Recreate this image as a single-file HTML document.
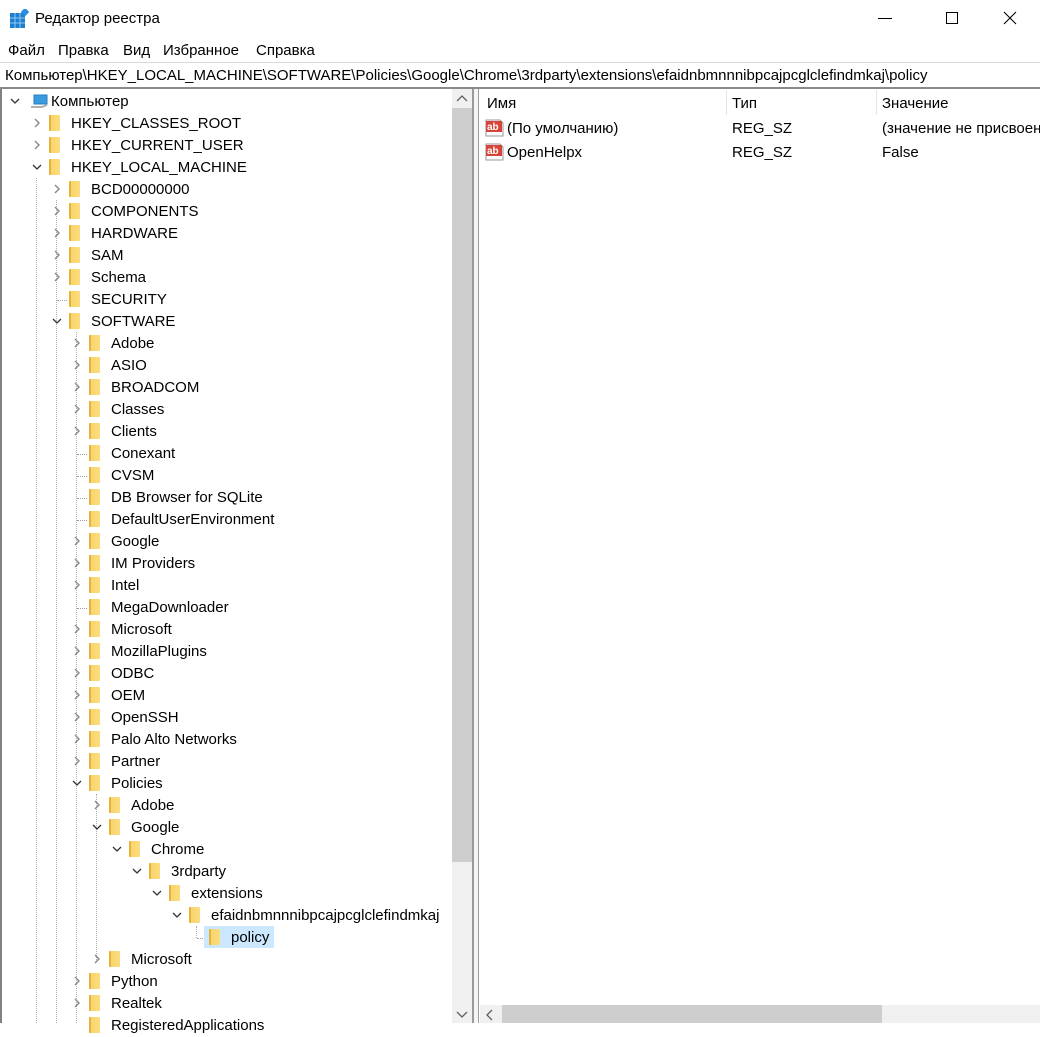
<!DOCTYPE html>
<html><head><meta charset="utf-8"><style>
*{margin:0;padding:0;box-sizing:border-box}
body{width:1040px;height:1023px;overflow:hidden;background:#fff;font-family:"Liberation Sans","DejaVu Sans",sans-serif;font-size:15px;color:#000;position:relative}
.a{position:absolute;white-space:nowrap}
.r{position:absolute;height:22px;line-height:22px;white-space:nowrap}
.r .ch{position:absolute;top:6px;width:10px;height:10px}
.r .f{position:absolute;top:3px;width:11px;height:16px;background:linear-gradient(90deg,#e6b23a 0,#e6b23a 2px,#f8d56c 2px,#fadc80 100%);border-radius:1px}
.r .t{position:absolute;top:1px}
.dl{position:absolute;border-left:1px dotted #b0b0b0}
.dh{position:absolute;border-top:1px dotted #a0a0a0;height:0}
</style></head><body>
<svg class="a" style="left:10px;top:9px" width="19" height="19" viewBox="0 0 19 19">
<rect x="0" y="4" width="15" height="15" fill="#1e7fd0"/>
<g stroke="#8fc6f2" stroke-width="1"><line x1="5" y1="4" x2="5" y2="19"/><line x1="10" y1="4" x2="10" y2="19"/><line x1="0" y1="9" x2="15" y2="9"/><line x1="0" y1="14" x2="15" y2="14"/></g>
<rect x="12" y="0" width="6" height="6" fill="#2b8ce0" transform="rotate(45 15 3)"/>
</svg>
<div class="a" style="left:35px;top:10px;font-size:15px">Редактор реестра</div>
<div class="a" style="left:878px;top:18px;width:14px;height:1px;background:#000"></div>
<div class="a" style="left:946px;top:12px;width:12px;height:12px;border:1px solid #000"></div>
<svg class="a" style="left:1003px;top:11px" width="14" height="14"><path d="M1 1L13 13M13 1L1 13" stroke="#000" stroke-width="1.1"/></svg>
<div class="a" style="left:8px;top:42px">Файл</div>
<div class="a" style="left:58px;top:42px">Правка</div>
<div class="a" style="left:123px;top:42px">Вид</div>
<div class="a" style="left:163px;top:42px">Избранное</div>
<div class="a" style="left:256px;top:42px">Справка</div>
<div class="a" style="left:0;top:62px;width:1040px;height:1px;background:#d9d9d9"></div>
<div class="a" style="left:5px;top:67px">Компьютер\HKEY_LOCAL_MACHINE\SOFTWARE\Policies\Google\Chrome\3rdparty\extensions\efaidnbmnnnibpcajpcglclefindmkaj\policy</div>
<div class="a" style="left:0;top:87px;width:1040px;height:2px;background:#8a8a8a"></div>
<div class="a" style="left:0;top:89px;width:2px;height:934px;background:#828282"></div>
<div class="a" style="left:452px;top:89px;width:20px;height:934px;background:#f0f0f0"></div>
<div class="a" style="left:452px;top:108px;width:20px;height:754px;background:#cdcdcd"></div>
<svg class="a" style="left:456px;top:95px" width="12" height="8"><path d="M1 6L6 1L11 6" stroke="#606060" stroke-width="1.3" fill="none"/></svg>
<svg class="a" style="left:456px;top:1011px" width="12" height="8"><path d="M1 1L6 6L11 1" stroke="#606060" stroke-width="1.3" fill="none"/></svg>
<div class="a" style="left:472px;top:89px;width:2px;height:934px;background:#9a9a9a"></div>
<div class="a" style="left:478px;top:89px;width:1px;height:934px;background:#9a9a9a"></div>
<div class="a" style="left:474px;top:89px;width:4px;height:934px;background:#f5f5f5"></div>

<div class="dl" style="left:36px;top:178px;height:845px"></div>
<div class="dl" style="left:56px;top:200px;height:823px"></div>
<div class="dh" style="left:57px;top:300px;width:10px"></div>
<div class="dl" style="left:76px;top:332px;height:691px"></div>
<div class="dh" style="left:77px;top:454px;width:10px"></div>
<div class="dh" style="left:77px;top:476px;width:10px"></div>
<div class="dh" style="left:77px;top:498px;width:10px"></div>
<div class="dh" style="left:77px;top:520px;width:10px"></div>
<div class="dh" style="left:77px;top:608px;width:10px"></div>
<div class="dl" style="left:96px;top:794px;height:166px"></div>
<div class="dl" style="left:196px;top:926px;height:12px"></div>
<div class="dh" style="left:197px;top:938px;width:10px"></div>

<div class="r" style="top:90px;left:0">
<svg class="ch" style="left:10px" viewBox="0 0 10 10"><path d="M1 3L5 7L9 3" stroke="#333" stroke-width="1.3" fill="none"/></svg>
<svg style="position:absolute;left:30px;top:3px" width="20" height="17"><path d="M4 2L17 2L17 11L4 11Z" fill="#3a9be0" stroke="#2a7cc0"/><path d="M1 14L12 14L17 12" stroke="#b0b0b0" stroke-width="2" fill="none"/></svg>
<span class="t" style="left:51px">Компьютер</span></div>

<div class="r" style="top:112px;left:0"><svg class="ch" style="left:32px" viewBox="0 0 10 10"><path d="M3 1L7 5L3 9" stroke="#888" stroke-width="1.4" fill="none"/></svg><div class="f" style="left:49px"></div><span class="t" style="left:71px">HKEY_CLASSES_ROOT</span></div>
<div class="r" style="top:134px;left:0"><svg class="ch" style="left:32px" viewBox="0 0 10 10"><path d="M3 1L7 5L3 9" stroke="#888" stroke-width="1.4" fill="none"/></svg><div class="f" style="left:49px"></div><span class="t" style="left:71px">HKEY_CURRENT_USER</span></div>
<div class="r" style="top:156px;left:0"><svg class="ch" style="left:32px" viewBox="0 0 10 10"><path d="M1 3L5 7L9 3" stroke="#333" stroke-width="1.3" fill="none"/></svg><div class="f" style="left:49px"></div><span class="t" style="left:71px">HKEY_LOCAL_MACHINE</span></div>

<div class="r" style="top:178px;left:20px"><svg class="ch" style="left:32px" viewBox="0 0 10 10"><path d="M3 1L7 5L3 9" stroke="#888" stroke-width="1.4" fill="none"/></svg><div class="f" style="left:49px"></div><span class="t" style="left:71px">BCD00000000</span></div>
<div class="r" style="top:200px;left:20px"><svg class="ch" style="left:32px" viewBox="0 0 10 10"><path d="M3 1L7 5L3 9" stroke="#888" stroke-width="1.4" fill="none"/></svg><div class="f" style="left:49px"></div><span class="t" style="left:71px">COMPONENTS</span></div>
<div class="r" style="top:222px;left:20px"><svg class="ch" style="left:32px" viewBox="0 0 10 10"><path d="M3 1L7 5L3 9" stroke="#888" stroke-width="1.4" fill="none"/></svg><div class="f" style="left:49px"></div><span class="t" style="left:71px">HARDWARE</span></div>
<div class="r" style="top:244px;left:20px"><svg class="ch" style="left:32px" viewBox="0 0 10 10"><path d="M3 1L7 5L3 9" stroke="#888" stroke-width="1.4" fill="none"/></svg><div class="f" style="left:49px"></div><span class="t" style="left:71px">SAM</span></div>
<div class="r" style="top:266px;left:20px"><svg class="ch" style="left:32px" viewBox="0 0 10 10"><path d="M3 1L7 5L3 9" stroke="#888" stroke-width="1.4" fill="none"/></svg><div class="f" style="left:49px"></div><span class="t" style="left:71px">Schema</span></div>
<div class="r" style="top:288px;left:20px"><div class="f" style="left:49px"></div><span class="t" style="left:71px">SECURITY</span></div>
<div class="r" style="top:310px;left:20px"><svg class="ch" style="left:32px" viewBox="0 0 10 10"><path d="M1 3L5 7L9 3" stroke="#333" stroke-width="1.3" fill="none"/></svg><div class="f" style="left:49px"></div><span class="t" style="left:71px">SOFTWARE</span></div>

<div class="r" style="top:332px;left:40px"><svg class="ch" style="left:32px" viewBox="0 0 10 10"><path d="M3 1L7 5L3 9" stroke="#888" stroke-width="1.4" fill="none"/></svg><div class="f" style="left:49px"></div><span class="t" style="left:71px">Adobe</span></div>
<div class="r" style="top:354px;left:40px"><svg class="ch" style="left:32px" viewBox="0 0 10 10"><path d="M3 1L7 5L3 9" stroke="#888" stroke-width="1.4" fill="none"/></svg><div class="f" style="left:49px"></div><span class="t" style="left:71px">ASIO</span></div>
<div class="r" style="top:376px;left:40px"><svg class="ch" style="left:32px" viewBox="0 0 10 10"><path d="M3 1L7 5L3 9" stroke="#888" stroke-width="1.4" fill="none"/></svg><div class="f" style="left:49px"></div><span class="t" style="left:71px">BROADCOM</span></div>
<div class="r" style="top:398px;left:40px"><svg class="ch" style="left:32px" viewBox="0 0 10 10"><path d="M3 1L7 5L3 9" stroke="#888" stroke-width="1.4" fill="none"/></svg><div class="f" style="left:49px"></div><span class="t" style="left:71px">Classes</span></div>
<div class="r" style="top:420px;left:40px"><svg class="ch" style="left:32px" viewBox="0 0 10 10"><path d="M3 1L7 5L3 9" stroke="#888" stroke-width="1.4" fill="none"/></svg><div class="f" style="left:49px"></div><span class="t" style="left:71px">Clients</span></div>
<div class="r" style="top:442px;left:40px"><div class="f" style="left:49px"></div><span class="t" style="left:71px">Conexant</span></div>
<div class="r" style="top:464px;left:40px"><div class="f" style="left:49px"></div><span class="t" style="left:71px">CVSM</span></div>
<div class="r" style="top:486px;left:40px"><div class="f" style="left:49px"></div><span class="t" style="left:71px">DB Browser for SQLite</span></div>
<div class="r" style="top:508px;left:40px"><div class="f" style="left:49px"></div><span class="t" style="left:71px">DefaultUserEnvironment</span></div>
<div class="r" style="top:530px;left:40px"><svg class="ch" style="left:32px" viewBox="0 0 10 10"><path d="M3 1L7 5L3 9" stroke="#888" stroke-width="1.4" fill="none"/></svg><div class="f" style="left:49px"></div><span class="t" style="left:71px">Google</span></div>
<div class="r" style="top:552px;left:40px"><svg class="ch" style="left:32px" viewBox="0 0 10 10"><path d="M3 1L7 5L3 9" stroke="#888" stroke-width="1.4" fill="none"/></svg><div class="f" style="left:49px"></div><span class="t" style="left:71px">IM Providers</span></div>
<div class="r" style="top:574px;left:40px"><svg class="ch" style="left:32px" viewBox="0 0 10 10"><path d="M3 1L7 5L3 9" stroke="#888" stroke-width="1.4" fill="none"/></svg><div class="f" style="left:49px"></div><span class="t" style="left:71px">Intel</span></div>
<div class="r" style="top:596px;left:40px"><div class="f" style="left:49px"></div><span class="t" style="left:71px">MegaDownloader</span></div>
<div class="r" style="top:618px;left:40px"><svg class="ch" style="left:32px" viewBox="0 0 10 10"><path d="M3 1L7 5L3 9" stroke="#888" stroke-width="1.4" fill="none"/></svg><div class="f" style="left:49px"></div><span class="t" style="left:71px">Microsoft</span></div>
<div class="r" style="top:640px;left:40px"><svg class="ch" style="left:32px" viewBox="0 0 10 10"><path d="M3 1L7 5L3 9" stroke="#888" stroke-width="1.4" fill="none"/></svg><div class="f" style="left:49px"></div><span class="t" style="left:71px">MozillaPlugins</span></div>
<div class="r" style="top:662px;left:40px"><svg class="ch" style="left:32px" viewBox="0 0 10 10"><path d="M3 1L7 5L3 9" stroke="#888" stroke-width="1.4" fill="none"/></svg><div class="f" style="left:49px"></div><span class="t" style="left:71px">ODBC</span></div>
<div class="r" style="top:684px;left:40px"><svg class="ch" style="left:32px" viewBox="0 0 10 10"><path d="M3 1L7 5L3 9" stroke="#888" stroke-width="1.4" fill="none"/></svg><div class="f" style="left:49px"></div><span class="t" style="left:71px">OEM</span></div>
<div class="r" style="top:706px;left:40px"><svg class="ch" style="left:32px" viewBox="0 0 10 10"><path d="M3 1L7 5L3 9" stroke="#888" stroke-width="1.4" fill="none"/></svg><div class="f" style="left:49px"></div><span class="t" style="left:71px">OpenSSH</span></div>
<div class="r" style="top:728px;left:40px"><svg class="ch" style="left:32px" viewBox="0 0 10 10"><path d="M3 1L7 5L3 9" stroke="#888" stroke-width="1.4" fill="none"/></svg><div class="f" style="left:49px"></div><span class="t" style="left:71px">Palo Alto Networks</span></div>
<div class="r" style="top:750px;left:40px"><svg class="ch" style="left:32px" viewBox="0 0 10 10"><path d="M3 1L7 5L3 9" stroke="#888" stroke-width="1.4" fill="none"/></svg><div class="f" style="left:49px"></div><span class="t" style="left:71px">Partner</span></div>
<div class="r" style="top:772px;left:40px"><svg class="ch" style="left:32px" viewBox="0 0 10 10"><path d="M1 3L5 7L9 3" stroke="#333" stroke-width="1.3" fill="none"/></svg><div class="f" style="left:49px"></div><span class="t" style="left:71px">Policies</span></div>

<div class="r" style="top:794px;left:60px"><svg class="ch" style="left:32px" viewBox="0 0 10 10"><path d="M3 1L7 5L3 9" stroke="#888" stroke-width="1.4" fill="none"/></svg><div class="f" style="left:49px"></div><span class="t" style="left:71px">Adobe</span></div>
<div class="r" style="top:816px;left:60px"><svg class="ch" style="left:32px" viewBox="0 0 10 10"><path d="M1 3L5 7L9 3" stroke="#333" stroke-width="1.3" fill="none"/></svg><div class="f" style="left:49px"></div><span class="t" style="left:71px">Google</span></div>
<div class="r" style="top:838px;left:80px"><svg class="ch" style="left:32px" viewBox="0 0 10 10"><path d="M1 3L5 7L9 3" stroke="#333" stroke-width="1.3" fill="none"/></svg><div class="f" style="left:49px"></div><span class="t" style="left:71px">Chrome</span></div>
<div class="r" style="top:860px;left:100px"><svg class="ch" style="left:32px" viewBox="0 0 10 10"><path d="M1 3L5 7L9 3" stroke="#333" stroke-width="1.3" fill="none"/></svg><div class="f" style="left:49px"></div><span class="t" style="left:71px">3rdparty</span></div>
<div class="r" style="top:882px;left:120px"><svg class="ch" style="left:32px" viewBox="0 0 10 10"><path d="M1 3L5 7L9 3" stroke="#333" stroke-width="1.3" fill="none"/></svg><div class="f" style="left:49px"></div><span class="t" style="left:71px">extensions</span></div>
<div class="r" style="top:904px;left:140px"><svg class="ch" style="left:32px" viewBox="0 0 10 10"><path d="M1 3L5 7L9 3" stroke="#333" stroke-width="1.3" fill="none"/></svg><div class="f" style="left:49px"></div><span class="t" style="left:71px">efaidnbmnnnibpcajpcglclefindmkaj</span></div>
<div class="a" style="left:204px;top:926px;width:70px;height:22px;background:#cce8ff"></div>
<div class="r" style="top:926px;left:160px"><div class="f" style="left:49px"></div><span class="t" style="left:71px">policy</span></div>
<div class="r" style="top:948px;left:60px"><svg class="ch" style="left:32px" viewBox="0 0 10 10"><path d="M3 1L7 5L3 9" stroke="#888" stroke-width="1.4" fill="none"/></svg><div class="f" style="left:49px"></div><span class="t" style="left:71px">Microsoft</span></div>
<div class="r" style="top:970px;left:40px"><svg class="ch" style="left:32px" viewBox="0 0 10 10"><path d="M3 1L7 5L3 9" stroke="#888" stroke-width="1.4" fill="none"/></svg><div class="f" style="left:49px"></div><span class="t" style="left:71px">Python</span></div>
<div class="r" style="top:992px;left:40px"><svg class="ch" style="left:32px" viewBox="0 0 10 10"><path d="M3 1L7 5L3 9" stroke="#888" stroke-width="1.4" fill="none"/></svg><div class="f" style="left:49px"></div><span class="t" style="left:71px">Realtek</span></div>
<div class="r" style="top:1014px;left:40px"><div class="f" style="left:49px"></div><span class="t" style="left:71px">RegisteredApplications</span></div>

<div class="a" style="left:487px;top:95px">Имя</div>
<div class="a" style="left:726px;top:90px;width:1px;height:25px;background:#e5e5e5"></div>
<div class="a" style="left:732px;top:95px">Тип</div>
<div class="a" style="left:876px;top:90px;width:1px;height:25px;background:#e5e5e5"></div>
<div class="a" style="left:882px;top:95px">Значение</div>

<svg class="a" style="left:485px;top:119px" width="19" height="18"><path d="M1 1H15L18 4V17H1Z" fill="#fff" stroke="#9a9a9a"/><rect x="1" y="2" width="16" height="11" fill="#d8443a"/><text x="2" y="11" font-family="Liberation Sans" font-size="10" font-weight="bold" fill="#fff">ab</text></svg>
<div class="a" style="left:507px;top:120px">(По умолчанию)</div>
<div class="a" style="left:732px;top:120px">REG_SZ</div>
<div class="a" style="left:882px;top:120px">(значение не присвоено)</div>
<svg class="a" style="left:485px;top:143px" width="19" height="18"><path d="M1 1H15L18 4V17H1Z" fill="#fff" stroke="#9a9a9a"/><rect x="1" y="2" width="16" height="11" fill="#d8443a"/><text x="2" y="11" font-family="Liberation Sans" font-size="10" font-weight="bold" fill="#fff">ab</text></svg>
<div class="a" style="left:507px;top:144px">OpenHelpx</div>
<div class="a" style="left:732px;top:144px">REG_SZ</div>
<div class="a" style="left:882px;top:144px">False</div>

<div class="a" style="left:480px;top:1005px;width:560px;height:18px;background:#f0f0f0"></div>
<div class="a" style="left:502px;top:1005px;width:380px;height:18px;background:#cdcdcd"></div>
<svg class="a" style="left:486px;top:1009px" width="8" height="12"><path d="M6 1L1 6L6 11" stroke="#606060" stroke-width="1.3" fill="none"/></svg>
</body></html>
